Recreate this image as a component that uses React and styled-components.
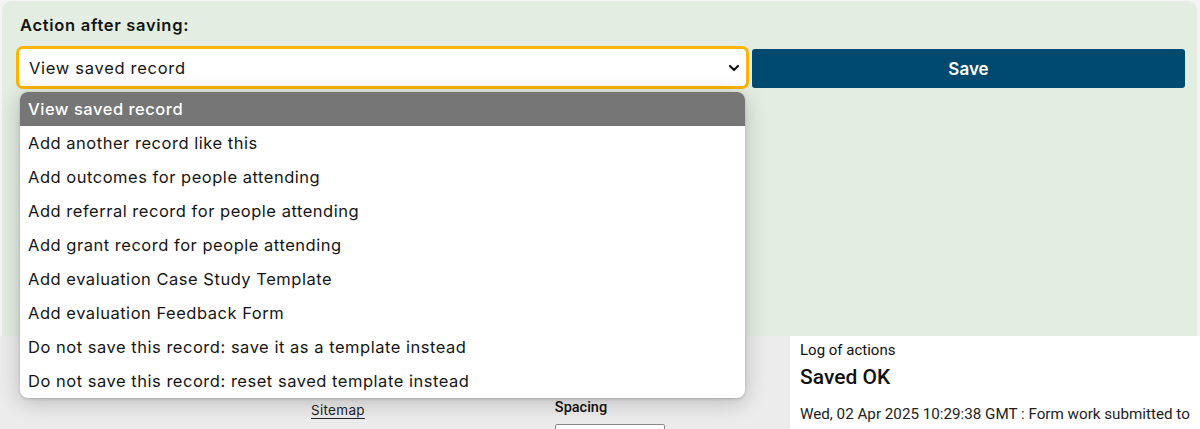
import React from "react";
import styled, { createGlobalStyle } from "styled-components";

const GlobalStyle = createGlobalStyle`
  body {
    margin: 0;
    background: #f4f4f5;
    font-family: Inter, "Noto Sans", sans-serif;
    color: #111;
  }
`;

const Page = styled.div`
  width: 1200px;
  height: 429px;
  overflow: hidden;
  display: flex;
  flex-direction: column;
`;

const Panel = styled.section`
  flex-shrink: 0;
  box-sizing: border-box;
  height: 335px;
  margin: 1px 3px 0 2px;
  padding: 14px 12px 0 14px;
  background: #e3ede2;
  border-radius: 9px 9px 0 0;
`;

const Label = styled.div`
  font-size: 16.5px;
  font-weight: 600;
  line-height: 20px;
  letter-spacing: 0.7px;
  padding-left: 4px;
  color: #151515;
`;

const ActionRow = styled.div`
  display: flex;
  gap: 3px;
  margin-top: 11px;
`;

const SelectWrap = styled.div`
  position: relative;
  width: 733px;
`;

const SelectBox = styled.div`
  box-sizing: border-box;
  height: 43px;
  display: flex;
  align-items: center;
  justify-content: space-between;
  padding: 0 6px 0 10px;
  background: #fff;
  border: 3px solid #fbb500;
  border-radius: 7px;
  font-size: 16.5px;
  letter-spacing: 0.7px;
  color: #151515;
`;

const Chevron = styled.svg`
  width: 12px;
  height: 12px;
`;

const Menu = styled.ul`
  position: absolute;
  top: 46px;
  left: 4px;
  width: 725px;
  margin: 0;
  padding: 0;
  list-style: none;
  background: #fff;
  border-radius: 8px;
  overflow: hidden;
  box-shadow: 0 4px 22px rgba(0, 0, 0, 0.22), 0 1px 3px rgba(0, 0, 0, 0.18);
  z-index: 2;
`;

const Item = styled.li`
  height: 34px;
  line-height: 34px;
  padding: 0 8px;
  font-size: 16.5px;
  letter-spacing: 0.52px;
  color: ${(p) => (p.$active ? "#fff" : "#151515")};
  background: ${(p) => (p.$active ? "#767676" : "transparent")};
  font-weight: ${(p) => (p.$active ? 500 : 400)};
  white-space: nowrap;
`;

const SaveButton = styled.button`
  flex: 1;
  height: 39px;
  margin-top: 3px;
  border: none;
  border-radius: 3px;
  background: #004a6f;
  color: #fff;
  font-family: Inter, "Noto Sans", sans-serif;
  font-size: 17px;
  font-weight: 600;
`;

const Bottom = styled.div`
  flex: 1;
  min-height: 0;
  display: flex;
`;

const FooterLinks = styled.div`
  width: 790px;
  background: #ececec;
  display: flex;
  align-items: flex-start;
  padding-top: 64px;
  box-sizing: border-box;
`;

const SitemapLink = styled.a`
  margin-left: 311px;
  margin-top: 2px;
  font-size: 13.5px;
  letter-spacing: 0.3px;
  color: #222;
  text-decoration: underline;
  text-underline-offset: 3px;
`;

const SpacingBlock = styled.div`
  margin-left: 190px;
  display: flex;
  flex-direction: column;
  gap: 8px;
`;

const SpacingLabel = styled.div`
  font-family: Roboto, sans-serif;
  font-size: 14.5px;
  font-weight: 500;
  line-height: 16px;
  color: #111;
`;

const SpacingInput = styled.div`
  width: 108px;
  height: 20px;
  border: 1px solid #888;
  border-radius: 2px;
  background: #fff;
`;

const LogPanel = styled.div`
  flex: 1;
  background: #fff;
  padding: 5px 0 0 10px;
  font-family: Roboto, sans-serif;
  overflow: hidden;
  white-space: nowrap;
`;

const LogTitle = styled.div`
  font-size: 15px;
  line-height: 18px;
  color: #111;
`;

const LogStatus = styled.div`
  margin-top: 6px;
  font-size: 21px;
  font-weight: 500;
  line-height: 24px;
  color: #111;
`;

const LogLine = styled.div`
  margin-top: 16px;
  font-size: 15.2px;
  color: #222;
`;

const options = [
  "View saved record",
  "Add another record like this",
  "Add outcomes for people attending",
  "Add referral record for people attending",
  "Add grant record for people attending",
  "Add evaluation Case Study Template",
  "Add evaluation Feedback Form",
  "Do not save this record: save it as a template instead",
  "Do not save this record: reset saved template instead",
];

export default function App() {
  return (
    <Page>
      <GlobalStyle />
      <Panel>
        <Label>Action after saving:</Label>
        <ActionRow>
          <SelectWrap>
            <SelectBox>
              <span>View saved record</span>
              <Chevron viewBox="0 0 12 12">
                <path d="M2 4l4 4 4-4" fill="none" stroke="#111" strokeWidth="2.2" strokeLinecap="round" strokeLinejoin="round" />
              </Chevron>
            </SelectBox>
            <Menu>
              {options.map((o, i) => (
                <Item key={o} $active={i === 0}>{o}</Item>
              ))}
            </Menu>
          </SelectWrap>
          <SaveButton>Save</SaveButton>
        </ActionRow>
      </Panel>
      <Bottom>
        <FooterLinks>
          <SitemapLink>Sitemap</SitemapLink>
          <SpacingBlock>
            <SpacingLabel>Spacing</SpacingLabel>
            <SpacingInput />
          </SpacingBlock>
        </FooterLinks>
        <LogPanel>
          <LogTitle>Log of actions</LogTitle>
          <LogStatus>Saved OK</LogStatus>
          <LogLine>Wed, 02 Apr 2025 10:29:38 GMT : Form work submitted to</LogLine>
        </LogPanel>
      </Bottom>
    </Page>
  );
}
